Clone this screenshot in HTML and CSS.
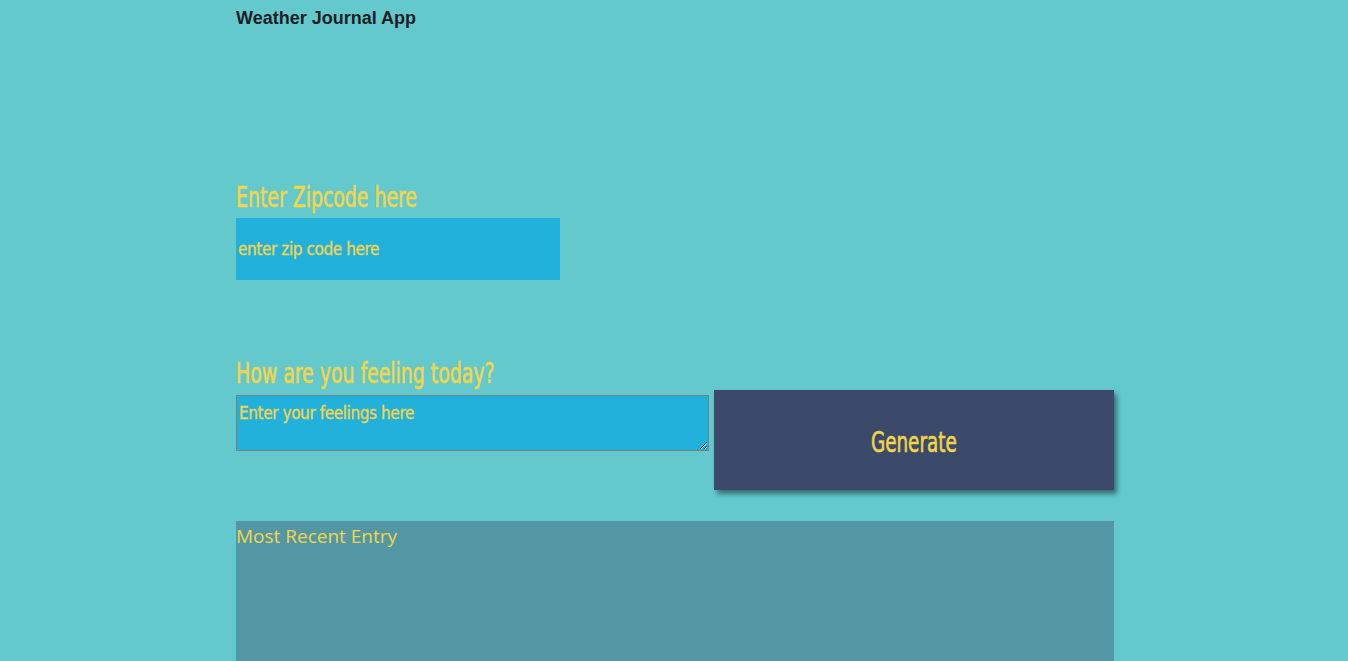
FILE: index.html
```html
<!DOCTYPE html>
<html lang="en">

<head>
    <meta charset="UTF-8">
    <meta name="viewport" content="width=device-width, initial-scale=1.0">
    <title>Weather Journal</title>
    <link rel="stylesheet" href="styles.css">
</head>

<body>
    <div class="app">
        <div class="app-title">Weather Journal App</div>

        <div class="zip-section">
            <label class="field-label" for="zip"><span>Enter Zipcode here</span></label>
            <input class="zip-input" type="text" id="zip" placeholder="enter zip code here">
        </div>

        <div class="feelings-section">
            <label class="field-label" for="feelings"><span>How are you feeling today?</span></label>
            <div class="feelings-row">
                <textarea class="feelings-input" id="feelings" placeholder="Enter your feelings here"></textarea>
                <button class="generate-btn" id="generate"><span>Generate</span></button>
            </div>
        </div>

        <div class="entry-holder">
            <div class="entry-title">Most Recent Entry</div>
            <div id="date"></div>
            <div id="temp"></div>
            <div id="content"></div>
        </div>
    </div>
</body>

</html>
```

FILE: styles.css
```css
body {
    margin: 0;
    background: #63c9cd;
}

.app {
    width: 878px;
    margin-left: calc(50% - 438px);
}

.app-title {
    padding-top: 8px;
    font-family: "Liberation Sans", Arial, sans-serif;
    font-size: 18px;
    font-weight: bold;
    line-height: 20px;
    color: #1d1f24;
}

.field-label {
    display: block;
    font-family: "DejaVu Sans Condensed", sans-serif;
    font-size: 28px;
    line-height: 32px;
    color: #f3d54a;
    -webkit-text-stroke: 0.6px #f3d54a;
}

/* oswald-ish: squeeze the condensed face a bit more */
.field-label span {
    display: inline-block;
    transform: scaleX(0.75);
    transform-origin: left center;
    white-space: nowrap;
}

.zip-section {
    margin-top: 154px;
}

.zip-section .field-label {
    margin-bottom: 4px;
}

.zip-input {
    display: block;
    box-sizing: border-box;
    width: 324px;
    height: 62px;
    padding: 0 2px;
    border: none;
    outline: none;
    background: #22b1da;
    font-family: "DejaVu Sans Condensed", sans-serif;
    font-size: 17px;
    letter-spacing: -0.4px;
    color: #f3d54a;
    -webkit-text-stroke: 0.3px #f3d54a;
}

.zip-input::placeholder,
.feelings-input::placeholder {
    color: #f3d54a;
    opacity: 1;
}

.feelings-section {
    margin-top: 78px;
}

.feelings-row {
    display: flex;
    align-items: flex-start;
    gap: 5px;
}

.feelings-input {
    box-sizing: border-box;
    width: 473px;
    height: 56px;
    margin-top: 5px;
    padding: 7px 2px;
    border: 1px solid #7d7d7d;
    background: #22b1da;
    font-family: "DejaVu Sans Condensed", sans-serif;
    font-size: 17px;
    letter-spacing: -0.4px;
    color: #f3d54a;
    -webkit-text-stroke: 0.3px #f3d54a;
    resize: both;
}

.generate-btn {
    width: 400px;
    height: 100px;
    padding: 4px 0 0;
    border: none;
    background: #3b4a6b;
    box-shadow: 3px 4px 5px rgba(0, 0, 0, 0.45);
    font-family: "DejaVu Sans Condensed", sans-serif;
    font-size: 28px;
    color: #f3d54a;
    -webkit-text-stroke: 0.6px #f3d54a;
    cursor: pointer;
}

.generate-btn span {
    display: inline-block;
    transform: scaleX(0.73);
}

.entry-holder {
    margin-top: 31px;
    height: 200px;
    background: #5397a5;
}

.entry-title {
    font-family: "Open Sans", "Noto Sans", sans-serif;
    font-size: 19px;
    line-height: 30px;
    color: #f3d54a;
}
```
